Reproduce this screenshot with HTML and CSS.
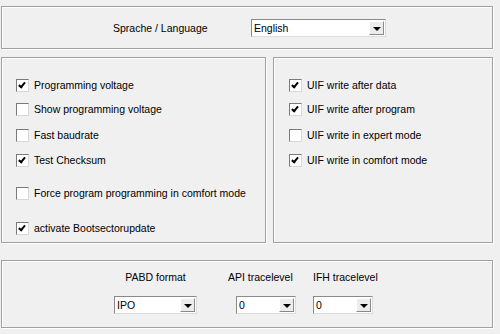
FILE: index.html
```html
<!DOCTYPE html>
<html lang="en">
<head>
    <title>Settings</title>
    <meta charset="UTF-8">
    <link rel="stylesheet" href="styles.css">
</head>
<body>
    <div class="dialog">
        <div class="panel top-panel">
            <span class="lang-label">Sprache / Language</span>
            <div class="combo combo-lang">
                <span class="combo-text">English</span>
                <span class="combo-btn"><span class="arrow"></span></span>
            </div>
        </div>

        <div class="middle">
            <div class="panel left-panel">
                <div class="check-row"><span class="box checked"></span>Programming voltage</div>
                <div class="check-row"><span class="box"></span>Show programming voltage</div>
                <div class="check-row"><span class="box"></span>Fast baudrate</div>
                <div class="check-row"><span class="box checked"></span>Test Checksum</div>
                <div class="check-row"><span class="box"></span>Force program programming in comfort mode</div>
                <div class="check-row"><span class="box checked"></span>activate Bootsectorupdate</div>
            </div>
            <div class="panel right-panel">
                <div class="check-row"><span class="box checked"></span>UIF write after data</div>
                <div class="check-row"><span class="box checked"></span>UIF write after program</div>
                <div class="check-row"><span class="box"></span>UIF write in expert mode</div>
                <div class="check-row"><span class="box checked"></span>UIF write in comfort mode</div>
            </div>
        </div>

        <div class="panel bottom-panel">
            <div class="field field-pabd">
                <span class="field-label">PABD format</span>
                <div class="combo combo-pabd">
                    <span class="combo-text">IPO</span>
                    <span class="combo-btn"><span class="arrow"></span></span>
                </div>
            </div>
            <div class="field field-api">
                <span class="field-label">API tracelevel</span>
                <div class="combo combo-small">
                    <span class="combo-text">0</span>
                    <span class="combo-btn"><span class="arrow"></span></span>
                </div>
            </div>
            <div class="field field-ifh">
                <span class="field-label">IFH tracelevel</span>
                <div class="combo combo-small">
                    <span class="combo-text">0</span>
                    <span class="combo-btn"><span class="arrow"></span></span>
                </div>
            </div>
        </div>
    </div>
</body>
</html>
```

FILE: styles.css
```css
body {
    margin: 0;
    background-color: #f0f0f0;
    font-family: "Liberation Sans", Arial, sans-serif;
    font-size: 10.5px;
    color: #000;
}

.dialog {
    width: 500px;
    height: 334px;
    padding: 6px 0 0 1px;
    box-sizing: border-box;
    display: flex;
    flex-direction: column;
}

.panel {
    border: 1px solid #a0a0a0;
    box-shadow: 1px 1px 0 #fff, inset 1px 1px 0 #fff;
    box-sizing: border-box;
}

/* top language row */
.top-panel {
    width: 492px;
    height: 43px;
    display: flex;
    align-items: center;
    padding-left: 111px;
}

.lang-label {
    width: 138px;
}

/* combo boxes */
.combo {
    height: 18px;
    background-color: #fff;
    border: 1px solid;
    border-color: #8a8a8a #dcdcdc #dcdcdc #8a8a8a;
    box-sizing: border-box;
    display: flex;
    align-items: center;
}

.combo-lang {
    width: 135px;
    margin-top: 1px;
}

.combo-pabd {
    width: 83px;
}

.combo-small {
    width: 60px;
}

.combo-text {
    flex: 1;
    padding-left: 2px;
    line-height: 16px;
}

.combo-btn {
    width: 15px;
    height: 14px;
    margin-right: 1px;
    background-color: #ececec;
    border: 1px solid;
    border-color: #fff #8a8a8a #8a8a8a #fff;
    box-sizing: border-box;
    display: flex;
    align-items: center;
    justify-content: center;
}

.arrow {
    width: 0;
    height: 0;
    border-left: 4px solid transparent;
    border-right: 4px solid transparent;
    border-top: 4px solid #000;
    margin-top: 1px;
}

/* middle panels */
.middle {
    display: flex;
    gap: 7px;
    margin-top: 8px;
    height: 186px;
}

.left-panel {
    width: 265px;
    height: 186px;
    padding: 20px 0 0 14px;
}

.right-panel {
    width: 220px;
    height: 186px;
    padding: 20px 0 0 15px;
}

.check-row {
    display: flex;
    align-items: center;
    height: 14px;
    white-space: nowrap;
}

.check-row:nth-child(2) { margin-top: 10px; }
.check-row:nth-child(3) { margin-top: 12px; }
.check-row:nth-child(4) { margin-top: 11px; }
.check-row:nth-child(5) { margin-top: 19px; }
.check-row:nth-child(6) { margin-top: 21px; }

.box {
    width: 13px;
    height: 13px;
    margin-right: 5px;
    background-color: #fff;
    border: 1px solid;
    border-color: #7a7a7a #d8d8d8 #d8d8d8 #7a7a7a;
    box-sizing: border-box;
    position: relative;
}

.box.checked::after {
    content: '';
    position: absolute;
    left: 3px;
    top: 1px;
    width: 2px;
    height: 5px;
    border-right: 2px solid #000;
    border-bottom: 2px solid #000;
    transform: rotate(40deg);
}

/* bottom trace levels */
.bottom-panel {
    width: 492px;
    height: 68px;
    margin-top: 17px;
    display: flex;
    padding-top: 10px;
}

.field {
    display: flex;
    flex-direction: column;
}

.field-label {
    line-height: 13px;
    margin-bottom: 12px;
    white-space: nowrap;
}

.field-pabd {
    margin-left: 112px;
    width: 83px;
    align-items: center;
}

.field-api {
    margin-left: 31px;
    align-items: flex-start;
}

.field-api .combo {
    margin-left: 8px;
}

.field-ifh {
    margin-left: 17px;
}
```
